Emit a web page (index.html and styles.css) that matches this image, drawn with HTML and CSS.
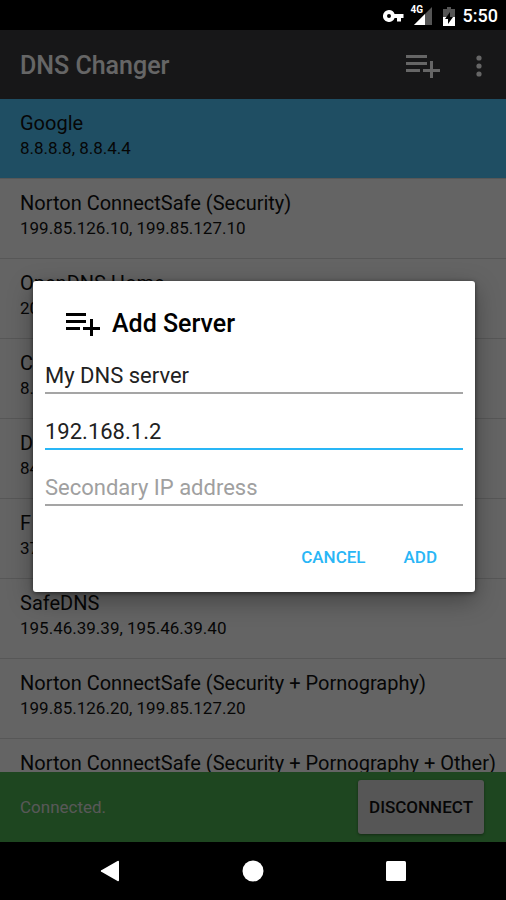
FILE: index.html
```html
<!DOCTYPE html>
<html lang="en">
<head>
<meta charset="utf-8">
<meta name="viewport" content="width=device-width, initial-scale=1">
<title>DNS Changer</title>
<link rel="stylesheet" href="styles.css">
</head>
<body>
<div class="status-bar">
  <svg class="key" viewBox="0 0 22 12" width="22" height="12"><path fill="#fff" fill-rule="evenodd" d="M6 0a6 6 0 1 0 5.600 8H14v3.500h4V8h2.500V4H11.600A6 6 0 0 0 6 0zm0 4a2 2 0 1 1 0 4 2 2 0 0 1 0-4z"/></svg>
  <div class="signal">
    <svg viewBox="0 0 20 18" width="20" height="18"><path fill="#555" d="M19 0v18H1z"/><path fill="#fff" d="M12 7v11H1z"/></svg>
    <span class="network">4G</span>
  </div>
  <svg class="battery" viewBox="0 0 12 19" width="12" height="19"><path fill="#555" d="M4 0h4v2h4v8H0V2h4z"/><path fill="#fff" d="M0 10h12v9H0z"/><path fill="#000" d="M7 5v5h3l-5 7v-5H2z"/></svg>
  <span class="clock">5:50</span>
</div>
<div class="app">
  <header class="app-bar">
    <h1 class="app-title">DNS Changer</h1>
    <button class="icon-button" aria-label="Add server"><svg viewBox="0 0 34 24" width="34" height="24"><path fill="currentColor" d="M0 1h21v3H0zM0 8h21v3H0zM0 15h14v3H0zM24 7h3v8h7v3h-7v6h-3v-6h-7v-3h7z"/></svg></button>
    <button class="icon-button" aria-label="More options"><svg viewBox="0 0 6 22" width="6" height="22"><g fill="currentColor"><circle cx="3" cy="3" r="2.600"/><circle cx="3" cy="11" r="2.600"/><circle cx="3" cy="19" r="2.600"/></g></svg></button>
  </header>
  <ul class="servers">
    <li class="server selected"><span class="name">Google</span><span class="address">8.8.8.8, 8.8.4.4</span></li>
    <li class="server"><span class="name">Norton ConnectSafe (Security)</span><span class="address">199.85.126.10, 199.85.127.10</span></li>
    <li class="server"><span class="name">OpenDNS Home</span><span class="address">20</span></li>
    <li class="server"><span class="name">C</span><span class="address">8.</span></li>
    <li class="server"><span class="name">D</span><span class="address">84</span></li>
    <li class="server"><span class="name">F</span><span class="address">37</span></li>
    <li class="server"><span class="name">SafeDNS</span><span class="address">195.46.39.39, 195.46.39.40</span></li>
    <li class="server"><span class="name">Norton ConnectSafe (Security + Pornography)</span><span class="address">199.85.126.20, 199.85.127.20</span></li>
    <li class="server"><span class="name">Norton ConnectSafe (Security + Pornography + Other)</span></li>
  </ul>
  <footer class="connection">
    <span>Connected.</span>
    <button class="disconnect">DISCONNECT</button>
  </footer>
  <div class="scrim">
    <form class="dialog" role="dialog" aria-labelledby="dialog-title">
      <div class="dialog-head">
        <svg viewBox="0 0 34 24" width="34" height="24"><path d="M0 1h20v3H0zM0 8h20v3H0zM0 15h14v3H0zM24 7h3v8h7v3h-7v6h-3v-6h-7v-3h7z"/></svg>
        <h2 class="dialog-title" id="dialog-title">Add Server</h2>
      </div>
      <div class="fields">
        <input class="field" type="text" aria-label="Name" value="My DNS server">
        <input class="field active" type="text" aria-label="Primary IP address" value="192.168.1.2">
        <input class="field" type="text" aria-label="Secondary IP address" placeholder="Secondary IP address">
      </div>
      <div class="actions">
        <button class="action" type="button">CANCEL</button>
        <button class="action" type="button">ADD</button>
      </div>
    </form>
  </div>
</div>
<nav class="nav-bar">
  <button class="nav-button" aria-label="Back"><svg viewBox="0 0 22 22" width="22" height="22"><path d="M20 1.500v19a1 1 0 0 1-1.500.500L2.800 12a1 1 0 0 1 0-2L18.500 1a1 1 0 0 1 1.500.500z"/></svg></button>
  <button class="nav-button" aria-label="Home"><svg viewBox="0 0 22 22" width="22" height="22"><circle cx="11" cy="11" r="10.500"/></svg></button>
  <button class="nav-button" aria-label="Recent apps"><svg viewBox="0 0 22 22" width="22" height="22"><rect x="1" y="1" width="20" height="20" rx="1.500"/></svg></button>
</nav>
</body>
</html>
```
FILE: styles.css
```css
* {
  box-sizing: border-box;
}

body {
  margin: 0;
  height: 100vh;
  display: flex;
  flex-direction: column;
  background: #000;
  font-family: Roboto, "Liberation Sans", sans-serif;
  overflow: hidden;
}

button {
  border: 0;
  padding: 0;
  background: none;
  font: inherit;
  color: inherit;
}

svg {
  display: block;
}

.status-bar {
  flex: none;
  height: 30px;
  padding: 2px 8px 0;
  display: flex;
  align-items: center;
  justify-content: flex-end;
  color: #fff;
}

.signal {
  position: relative;
  margin: 0 10px 0 8px;
}

.network {
  position: absolute;
  left: -2px;
  top: -2px;
  font-size: 10px;
  line-height: 10px;
  font-weight: 700;
}

.clock {
  margin-left: 8px;
  font-size: 18px;
  line-height: 20px;
  font-weight: 500;
}

.app {
  position: relative;
  flex: 1;
  min-height: 0;
  display: flex;
  flex-direction: column;
  background: #fafafa;
}

.app-bar {
  flex: none;
  height: 69px;
  padding: 2px 24px 0 20px;
  display: flex;
  align-items: center;
  gap: 36px;
  background: #3a3a3d;
  color: #fff;
}

.app-title {
  flex: 1;
  margin: 0;
  font-size: 25px;
  line-height: 32px;
  font-weight: 500;
}

.servers {
  flex: 1;
  min-height: 0;
  margin: 0;
  padding: 0;
  list-style: none;
  overflow: hidden;
}

.server {
  height: 80px;
  padding: 12px 10px 0 20px;
  border-bottom: 1px solid #dadada;
  color: #111;
  white-space: nowrap;
}

.selected {
  background: #4fc3f7;
}

.name,
.address {
  display: block;
}

.name {
  font-size: 20px;
  line-height: 25px;
}

.address {
  font-size: 17px;
  line-height: 24px;
}

.connection {
  flex: none;
  height: 70px;
  padding: 0 22px 0 20px;
  display: flex;
  align-items: center;
  justify-content: space-between;
  background: #4caf50;
  color: #dcdcdc;
  font-size: 17px;
}

.disconnect {
  height: 54px;
  padding: 0 11px;
  border-radius: 3px;
  background: #d6d7d7;
  color: #111;
  font-size: 17px;
  font-weight: 500;
  box-shadow: 0 1px 3px rgba(0, 0, 0, 0.4);
}

.scrim {
  position: absolute;
  inset: 0;
  padding: 0 31px 0 33px;
  display: flex;
  align-items: center;
  background: rgba(0, 0, 0, 0.6);
}

.dialog {
  flex: 1;
  min-width: 0;
  padding: 23px 12px 12px;
  border-radius: 3px;
  background: #fff;
  box-shadow: 0 8px 24px rgba(0, 0, 0, 0.35), 0 1px 4px rgba(0, 0, 0, 0.5);
}

.dialog-head {
  display: flex;
  align-items: center;
  gap: 12px;
  padding: 4px 21px;
}

.dialog-title {
  margin: 0;
  font-size: 25px;
  line-height: 32px;
  font-weight: 500;
}

.fields {
  display: grid;
  gap: 24px;
  margin-top: 18px;
}

.field {
  width: 100%;
  height: 32px;
  padding: 0 0 2px;
  border: 0;
  border-bottom: 2px solid #a5a5a5;
  border-radius: 0;
  outline: 0;
  background: none;
  color: #212121;
  font: 22px Roboto, "Liberation Sans", sans-serif;
}

.field::placeholder {
  color: #a0a0a0;
}

.active {
  border-color: #29b6f6;
}

.actions {
  display: flex;
  justify-content: flex-end;
  gap: 18px;
  margin-top: 28px;
  padding-right: 16px;
}

.action {
  height: 46px;
  padding: 0 10px;
  color: #29b6f6;
  font-size: 17px;
  font-weight: 500;
}

.nav-bar {
  flex: none;
  height: 58px;
  padding: 0 38px;
  display: flex;
}

.nav-button {
  flex: 1;
  display: flex;
  align-items: center;
  justify-content: center;
  fill: #fff;
}
```
